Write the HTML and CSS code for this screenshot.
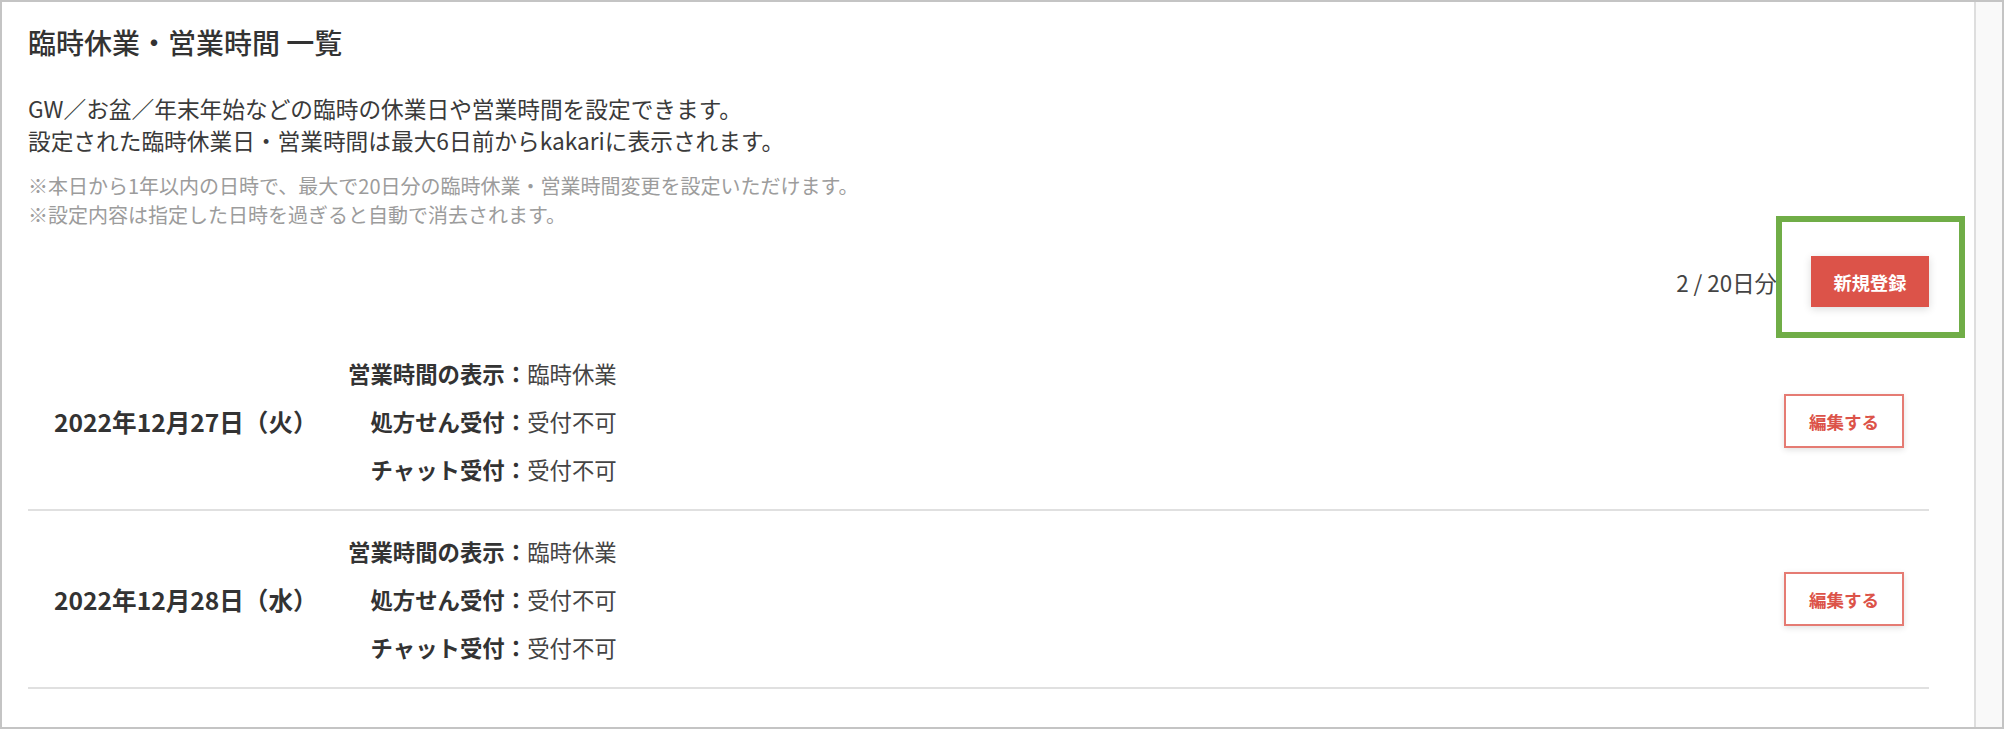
FILE: index.html
```html
<!DOCTYPE html>
<html lang="ja">
  <head>
    <meta charset="UTF-8" />
    <title>臨時休業・営業時間 一覧</title>
    <link rel="stylesheet" href="styles.css">
  </head>
  <body>
    <div class="frame">
      <main class="panel">
        <h1 class="panel-title">臨時休業・営業時間 一覧</h1>

        <div class="lead">
          <p>GW／お盆／年末年始などの臨時の休業日や営業時間を設定できます。</p>
          <p>設定された臨時休業日・営業時間は最大6日前からkakariに表示されます。</p>
        </div>

        <div class="notes">
          <p>※本日から1年以内の日時で、最大で20日分の臨時休業・営業時間変更を設定いただけます。</p>
          <p>※設定内容は指定した日時を過ぎると自動で消去されます。</p>
        </div>

        <div class="toolbar">
          <span class="count">2 / 20日分</span>
          <button class="btn-new">新規登録</button>
        </div>

        <ul class="closures">
          <li class="closure">
            <div class="closure-date">2022年12月27日（火）</div>
            <dl class="closure-info">
              <dt>営業時間の表示：</dt>
              <dd>臨時休業</dd>
              <dt>処方せん受付：</dt>
              <dd>受付不可</dd>
              <dt>チャット受付：</dt>
              <dd>受付不可</dd>
            </dl>
            <button class="btn-edit">編集する</button>
          </li>
          <li class="closure">
            <div class="closure-date">2022年12月28日（水）</div>
            <dl class="closure-info">
              <dt>営業時間の表示：</dt>
              <dd>臨時休業</dd>
              <dt>処方せん受付：</dt>
              <dd>受付不可</dd>
              <dt>チャット受付：</dt>
              <dd>受付不可</dd>
            </dl>
            <button class="btn-edit">編集する</button>
          </li>
        </ul>
      </main>

      <div class="sidebar"></div>

      <!-- 注目枠 -->
      <div class="highlight"></div>
    </div>
  </body>
</html>
```

FILE: styles.css
```css
body {
  margin: 0;
  font-family: "Noto Sans CJK JP", "Noto Sans", sans-serif;
  color: #333;
  background-color: #fff;
}

.frame {
  position: relative;
  display: flex;
  width: 2004px;
  height: 729px;
  box-sizing: border-box;
  border: 2px solid #c4c4c4;
  overflow: hidden;
}

.panel {
  flex: 1;
  padding: 20px 45px 0 26px;
}

.sidebar {
  width: 26px;
  background-color: #f9f9f9;
  border-left: 2px solid #dedede;
}

.panel-title {
  margin: 0;
  font-size: 28px;
  line-height: 40px;
  font-weight: 500;
  color: #333;
}

.lead {
  margin-top: 31px;
  font-size: 22.7px;
  line-height: 32px;
  color: #3a3a3a;
}

.lead p,
.notes p {
  margin: 0;
}

.notes {
  margin-top: 14px;
  font-size: 20px;
  line-height: 29px;
  color: #9c9c9c;
}

.toolbar {
  margin-top: 27px;
  display: flex;
  justify-content: flex-end;
  align-items: center;
  gap: 34px;
}

.count {
  font-size: 22.4px;
  color: #444;
}

.btn-new {
  width: 118px;
  height: 51px;
  border: none;
  background-color: #dc5349;
  color: white;
  font-family: inherit;
  font-size: 18.2px;
  font-weight: bold;
  box-shadow: 0 2px 8px rgba(0, 0, 0, 0.15);
  cursor: pointer;
}

.closures {
  list-style: none;
  margin: 26px 0 0;
  padding: 0;
}

.closure {
  display: flex;
  align-items: center;
  padding: 16px 0;
  border-bottom: 2px solid #e0e0e0;
}

.closure-date {
  width: 294px;
  padding-left: 26px;
  font-size: 24.6px;
  font-weight: bold;
  color: #333;
}

.closure-info {
  display: grid;
  grid-template-columns: auto auto;
  margin: 0;
  font-size: 22.4px;
  line-height: 48px;
}

.closure-info dt {
  text-align: right;
  font-weight: bold;
  color: #333;
}

.closure-info dd {
  margin: 0;
  color: #444;
}

.btn-edit {
  margin-left: auto;
  margin-right: 25px;
  width: 120px;
  height: 54px;
  background-color: white;
  border: 2px solid #e57b73;
  color: #dc5349;
  font-family: inherit;
  font-size: 17.5px;
  font-weight: bold;
  box-shadow: 0 2px 6px rgba(0, 0, 0, 0.12);
  cursor: pointer;
}

.highlight {
  position: absolute;
  left: 1774px;
  top: 214px;
  width: 189px;
  height: 122px;
  box-sizing: border-box;
  border: 6px solid #70ad47;
}
```
